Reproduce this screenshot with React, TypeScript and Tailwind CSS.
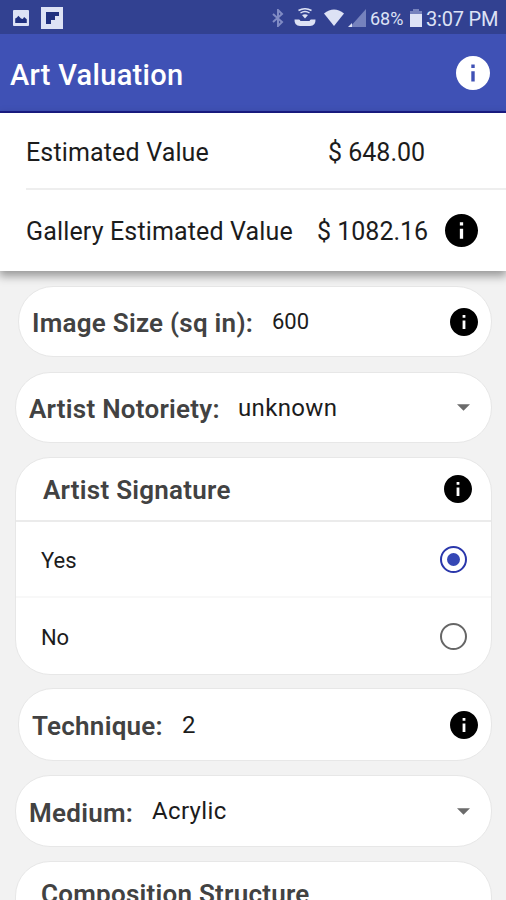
import type { ReactNode } from "react";
import clsx from "clsx";

function InfoIcon({ className }: { className?: string }) {
  return (
    <svg viewBox="2 2 20 20" className={clsx("shrink-0", className)} fill="currentColor">
      <path d="M12 2C6.48 2 2 6.48 2 12s4.48 10 10 10 10-4.48 10-10S17.52 2 12 2zm1 15h-2v-6h2v6zm0-8h-2V7h2v2z" />
    </svg>
  );
}

function Caret() {
  return (
    <svg viewBox="0 0 14 7" className="w-[13px] h-[7px] shrink-0" fill="#6b6b6b">
      <path d="M0 0h14L7 7z" />
    </svg>
  );
}

function StatusBar() {
  return (
    <div className="h-[34px] shrink-0 bg-[#324191] flex items-center text-[#dde2f5] pl-[13px] pr-[9px] pt-px">
      <svg viewBox="0 0 18 18" className="size-4">
        <rect width="18" height="18" rx="1" fill="currentColor" />
        <path d="M2.500 14.500v-5l2-1 1.500-2 3 3 2 .5 1.500-2 3 2.500v4z" fill="#20307f" />
      </svg>
      <svg viewBox="0 0 22 22" className="size-[22px] ml-3">
        <rect width="22" height="22" fill="currentColor" />
        <path d="M5 5h13v4h-4v4h-4v4H5z" fill="#20307f" />
      </svg>

      <div className="flex-1" />

      <svg viewBox="0 0 12 18" className="w-3 h-[18px] mr-px" fill="none" stroke="#808bc4" strokeWidth="2">
        <path d="M1 5l9 8-4 4V1l4 4-9 8" />
      </svg>
      {/* call over wifi */}
      <svg viewBox="0 0 22 19" className="w-[22px] h-[19px] ml-[9px]" fill="none" stroke="currentColor">
        <path d="M4.500 2.500q6.500-3.500 13 0M6.500 5q4.500-3 9 0" strokeWidth="1.500" />
        <path d="M8 7q3-1.500 6 0l-3 3.500z" fill="currentColor" stroke="none" />
        <path
          d="M.5 11.500H5q1.200 0 1.400 1.500h9.200q.2-1.500 1.400-1.500h4.500q.3 6.500-5.500 6.500H6Q.2 18 .5 11.500z"
          fill="currentColor"
          stroke="none"
        />
      </svg>
      <svg viewBox="0 0 20 17" className="w-5 h-[17px] ml-[8px]" fill="currentColor">
        <path d="M0 4.500Q10-3.500 20 4.500L10 17z" />
      </svg>
      <svg viewBox="0 0 18 18" className="w-[18px] h-[18px] ml-[4px]">
        <path d="M18 0v18H2z" fill="#7682bd" />
        <path d="M0 18l4-4v4z" fill="currentColor" />
      </svg>
      <span className="w-[34px] ml-[4px] pt-[2px] text-[18px] leading-none whitespace-nowrap">68%</span>
      <svg viewBox="0 0 12 18" className="w-3 h-[18px] ml-[6px]">
        <path d="M3 0h6v2h3v4H0V2h3z" fill="#7682bd" />
        <path d="M0 5h12v13H0z" fill="currentColor" />
      </svg>
      <span className="w-[71px] ml-[4px] pt-[2px] text-[20px] leading-none tracking-[-0.2px] whitespace-nowrap">
        3:07 PM
      </span>
    </div>
  );
}

function Card({ wide, className, children }: { wide?: boolean; className?: string; children: ReactNode }) {
  return (
    <div
      className={clsx(
        "bg-white border border-[#e7e7e7] rounded-[35px] shrink-0 mr-[14px]",
        wide ? "ml-[15px]" : "ml-[18px]",
        className
      )}
    >
      {children}
    </div>
  );
}

function Label({ className, children }: { className?: string; children: ReactNode }) {
  return (
    <span
      className={clsx(
        "text-[26px] leading-none font-semibold tracking-[0.25px] text-[#424242] whitespace-nowrap",
        className
      )}
    >
      {children}
    </span>
  );
}

function Radio({ checked }: { checked?: boolean }) {
  return (
    <span
      className={clsx(
        "size-[27px] rounded-full border-2 flex items-center justify-center",
        checked ? "border-[#2a37ab]" : "border-[#666]"
      )}
    >
      {checked && <span className="size-[13px] rounded-full bg-[#3547b5]" />}
    </span>
  );
}

export default function App() {
  return (
    <div className="w-full h-[900px] overflow-hidden flex flex-col bg-[#f2f2f2] font-['Roboto',sans-serif] text-[#1c1c1c]">
      <StatusBar />

      <header className="h-[79px] shrink-0 bg-[#3f51b5] border-b-2 border-[#1b1c88] flex items-center justify-between pl-[10px] pr-4 pt-px text-white">
        <h1 className="text-[29px] leading-none font-medium tracking-[0.3px] pt-[5px]">Art Valuation</h1>
        <InfoIcon className="size-[34px]" />
      </header>

      <section className="h-[158px] shrink-0 bg-white shadow-[0_4px_9px_1px_rgba(0,0,0,0.38)] relative z-10 text-[25px] leading-none whitespace-nowrap">
        <div className="ml-[26px] h-[77px] border-b-2 border-[#eee] flex items-center pt-[3px]">
          <span className="w-[302px] tracking-[0.15px]">Estimated Value</span>
          <span>$ 648.00</span>
        </div>
        <div className="ml-[26px] h-[81px] flex items-center">
          <span className="w-[291px] pt-px tracking-[0.15px]">Gallery Estimated Value</span>
          <span className="w-[128px] pt-px">$ 1082.16</span>
          <InfoIcon className="size-[33px] text-black" />
        </div>
      </section>

      <main className="flex flex-col pt-[15px]">
        <Card className="h-[71px] flex items-center pl-[13px] pr-[13px]">
          <Label className="w-[240px] pt-[3px]">Image Size (sq in):</Label>
          <span className="flex-1 text-[22px] leading-none">600</span>
          <InfoIcon className="size-[28px] text-black" />
        </Card>

        <Card wide className="h-[71px] mt-[15px] flex items-center pl-[13px] pr-[21px]">
          <Label className="w-[209px] pt-[3px]">Artist Notoriety:</Label>
          <span className="flex-1 text-[24px] leading-none tracking-[0.35px]">unknown</span>
          <Caret />
        </Card>

        <Card wide className="h-[218px] mt-[14px]">
          <div className="h-[64px] border-b-2 border-[#ebebeb] flex items-center justify-between pl-[27px] pr-[19px]">
            <Label className="pt-[2px]">Artist Signature</Label>
            <InfoIcon className="size-[28px] text-black" />
          </div>
          <div className="h-[76px] border-b-2 border-[#f8f8f8] flex items-center justify-between pl-[25px] pr-[24px]">
            <span className="text-[22px] leading-none pt-[4px]">Yes</span>
            <Radio checked />
          </div>
          <div className="h-[76px] flex items-center justify-between pl-[25px] pr-[24px]">
            <span className="text-[22px] leading-none pt-[4px] tracking-[-0.2px]">No</span>
            <Radio />
          </div>
        </Card>

        <Card className="h-[73px] mt-[13px] flex items-center pl-[13px] pr-[13px]">
          <Label className="w-[150px] pt-[3px]">Technique:</Label>
          <span className="flex-1 text-[24px] leading-none">2</span>
          <InfoIcon className="size-[28px] text-black" />
        </Card>

        <Card wide className="h-[72px] mt-[14px] flex items-center pl-[13px] pr-[21px]">
          <Label className="w-[123px] pt-[3px]">Medium:</Label>
          <span className="flex-1 text-[24px] leading-none tracking-[0.35px]">Acrylic</span>
          <Caret />
        </Card>

        <Card wide className="h-[218px] mt-[14px]">
          <div className="h-[64px] border-b-2 border-[#ebebeb] flex items-center pl-[25px]">
            <Label className="pt-[2px]">Composition Structure</Label>
          </div>
        </Card>
      </main>
    </div>
  );
}
